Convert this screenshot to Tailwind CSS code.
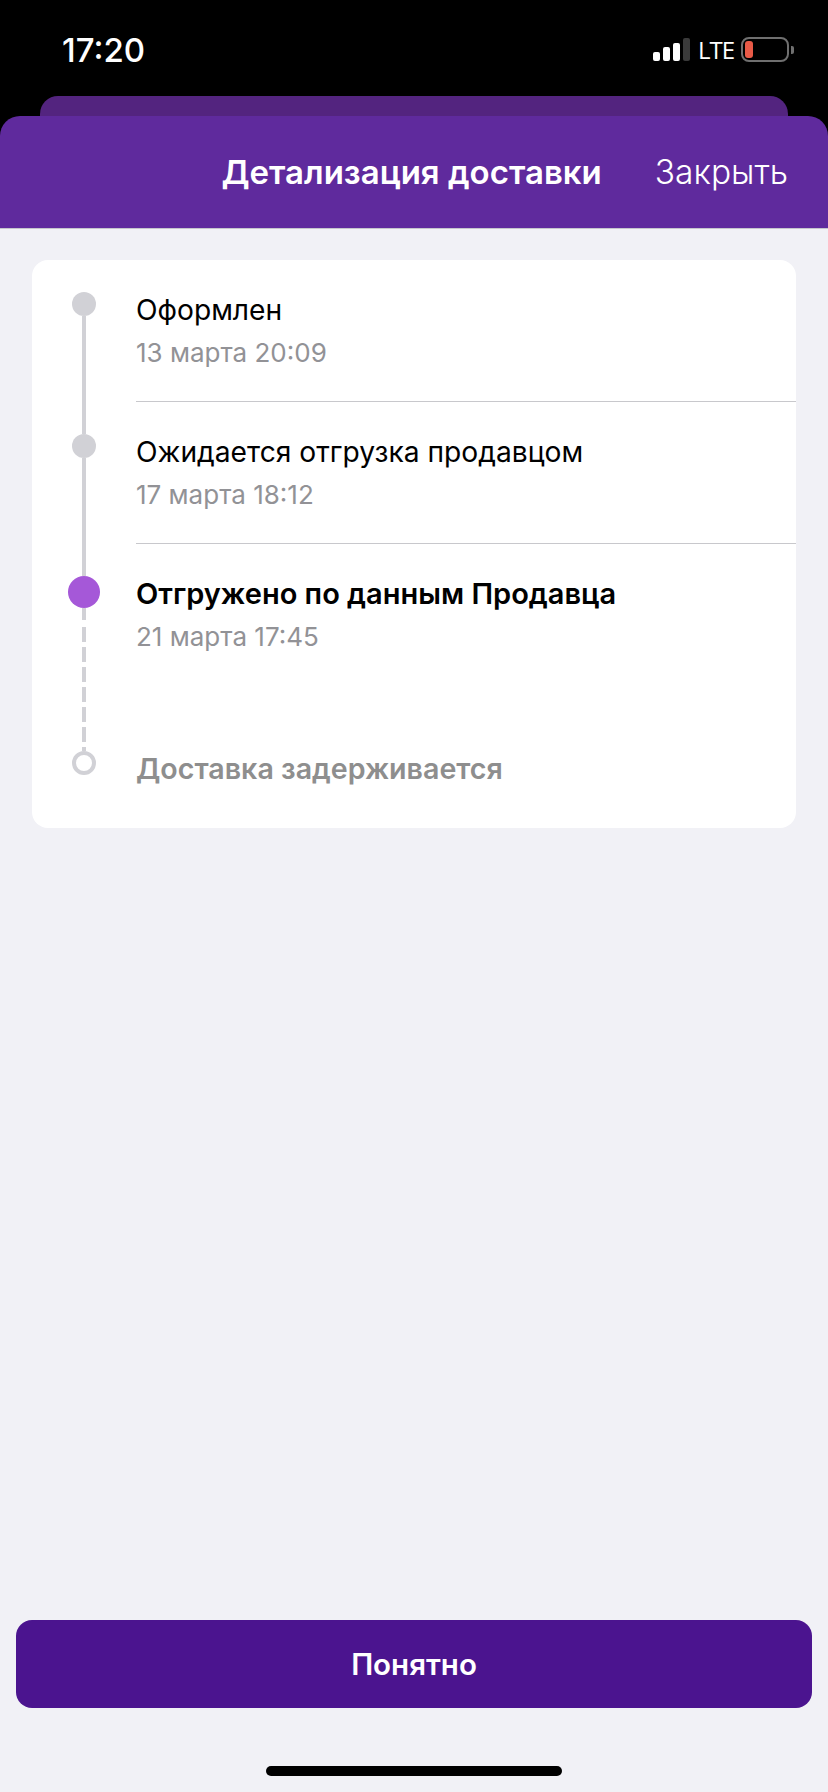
<!DOCTYPE html>
<html lang="ru">
<head>
    <meta charset="UTF-8">
    <meta name="viewport" content="width=device-width, initial-scale=1.0">
    <title>Детализация доставки</title>
    <script src="https://cdn.jsdelivr.net/npm/@tailwindcss/browser@4"></script>
</head>
<body class="bg-black">
    <div class="w-[828px] h-[1792px] flex flex-col bg-[#f1f1f6] overflow-hidden font-['Inter',sans-serif]">
        <!-- Status bar -->
        <div class="bg-black h-[96px] shrink-0 flex items-start justify-between">
            <div class="ml-[62px] mt-[30px] text-white text-[33px] leading-[40px] font-medium">17:20</div>
            <div class="flex items-center mt-[37px] mr-[34px] h-[25px]">
                <div class="flex items-end gap-[3px] h-[23px]">
                    <div class="w-[7px] h-[9px] rounded-[2px] bg-white"></div>
                    <div class="w-[7px] h-[14px] rounded-[2px] bg-white"></div>
                    <div class="w-[7px] h-[18px] rounded-[2px] bg-white"></div>
                    <div class="w-[7px] h-[23px] rounded-[2px] bg-[#3a3a3a]"></div>
                </div>
                <div class="ml-[8px] w-[34px] whitespace-nowrap text-white text-[24px] leading-[25px] tracking-[-1px] font-['Open_Sans',sans-serif]">LTE</div>
                <div class="ml-[9px] w-[48px] h-[25px] rounded-[8px] border-2 border-[#6f6f6f] p-[2px]">
                    <div class="w-[8px] h-full rounded-[3px] bg-[#e85a47]"></div>
                </div>
                <div class="ml-[2px] w-[3px] h-[8px] rounded-r-[2px] bg-[#6f6f6f]"></div>
            </div>
        </div>

        <!-- Sheet header -->
        <div class="bg-black shrink-0">
            <div class="mx-[40px] h-[20px] rounded-t-[18px] bg-[#53247f]"></div>
            <div class="h-[113px] rounded-t-[20px] bg-[#5f2a9d] border-b border-[#c5c5cc] flex items-center justify-end pr-[40px]">
                <div class="text-white text-[33px] leading-[40px] font-semibold">Детализация доставки</div>
                <div class="ml-[53px] text-white text-[33.5px] leading-[40px] font-light">Закрыть</div>
            </div>
        </div>

        <!-- Timeline card -->
        <div class="mt-[31px] ml-[32px] w-[764px] h-[568px] shrink-0 bg-white rounded-[16px] flex flex-col overflow-hidden">
            <div class="flex h-[142px]">
                <div class="w-[104px] flex flex-col items-center pt-[32px]">
                    <div class="w-[24px] h-[24px] rounded-full bg-[#d1d1d6] shrink-0"></div>
                    <div class="w-[4px] flex-1 bg-[#d1d1d6]"></div>
                </div>
                <div class="flex-1 border-b border-[#c8c8cc] pt-[30px]">
                    <div class="text-black text-[28.2px] leading-[40px]">Оформлен</div>
                    <div class="mt-[5px] text-[#929296] text-[26px] leading-[36px]">13 марта 20:09</div>
                </div>
            </div>
            <div class="flex h-[142px]">
                <div class="w-[104px] flex flex-col items-center">
                    <div class="w-[4px] h-[32px] bg-[#d1d1d6]"></div>
                    <div class="w-[24px] h-[24px] rounded-full bg-[#d1d1d6] shrink-0"></div>
                    <div class="w-[4px] flex-1 bg-[#d1d1d6]"></div>
                </div>
                <div class="flex-1 border-b border-[#c8c8cc] pt-[30px]">
                    <div class="text-black text-[28.2px] leading-[40px]">Ожидается отгрузка продавцом</div>
                    <div class="mt-[5px] text-[#929296] text-[26px] leading-[36px]">17 марта 18:12</div>
                </div>
            </div>
            <div class="flex h-[206px]">
                <div class="w-[104px] flex flex-col items-center">
                    <div class="w-[4px] h-[32px] bg-[#d1d1d6]"></div>
                    <div class="w-[32px] h-[32px] rounded-full bg-[#a558d8] shrink-0"></div>
                    <svg class="w-[4px] flex-1" viewBox="0 0 4 142" preserveAspectRatio="none">
                        <line x1="2" y1="0" x2="2" y2="142" stroke="#d1d1d6" stroke-width="4" stroke-dasharray="12 7 15 5 15 5 15 5 15 5 15 5 15 5 30"></line>
                    </svg>
                </div>
                <div class="flex-1 pt-[30px]">
                    <div class="text-black text-[29px] leading-[40px] font-semibold">Отгружено по данным Продавца</div>
                    <div class="mt-[5px] text-[#929296] text-[26px] leading-[36px]">21 марта 17:45</div>
                </div>
            </div>
            <div class="flex flex-1">
                <div class="w-[104px] flex flex-col items-center">
                    <div class="w-[4px] h-[1px] bg-[#d1d1d6]"></div>
                    <div class="w-[24px] h-[24px] rounded-full border-4 border-[#d1d1d6] shrink-0"></div>
                </div>
                <div class="flex-1">
                    <div class="text-[#8e8e8e] text-[28.6px] leading-[38px] font-semibold">Доставка задерживается</div>
                </div>
            </div>
        </div>

        <div class="flex-1"></div>

        <!-- Bottom button -->
        <button class="mx-[16px] h-[88px] shrink-0 rounded-[16px] bg-[#4b148f] text-white text-[29.5px] font-semibold">Понятно</button>

        <!-- Home indicator -->
        <div class="h-[84px] shrink-0 flex justify-center pt-[58px]">
            <div class="w-[296px] h-[10px] rounded-full bg-black"></div>
        </div>
    </div>
</body>
</html>
